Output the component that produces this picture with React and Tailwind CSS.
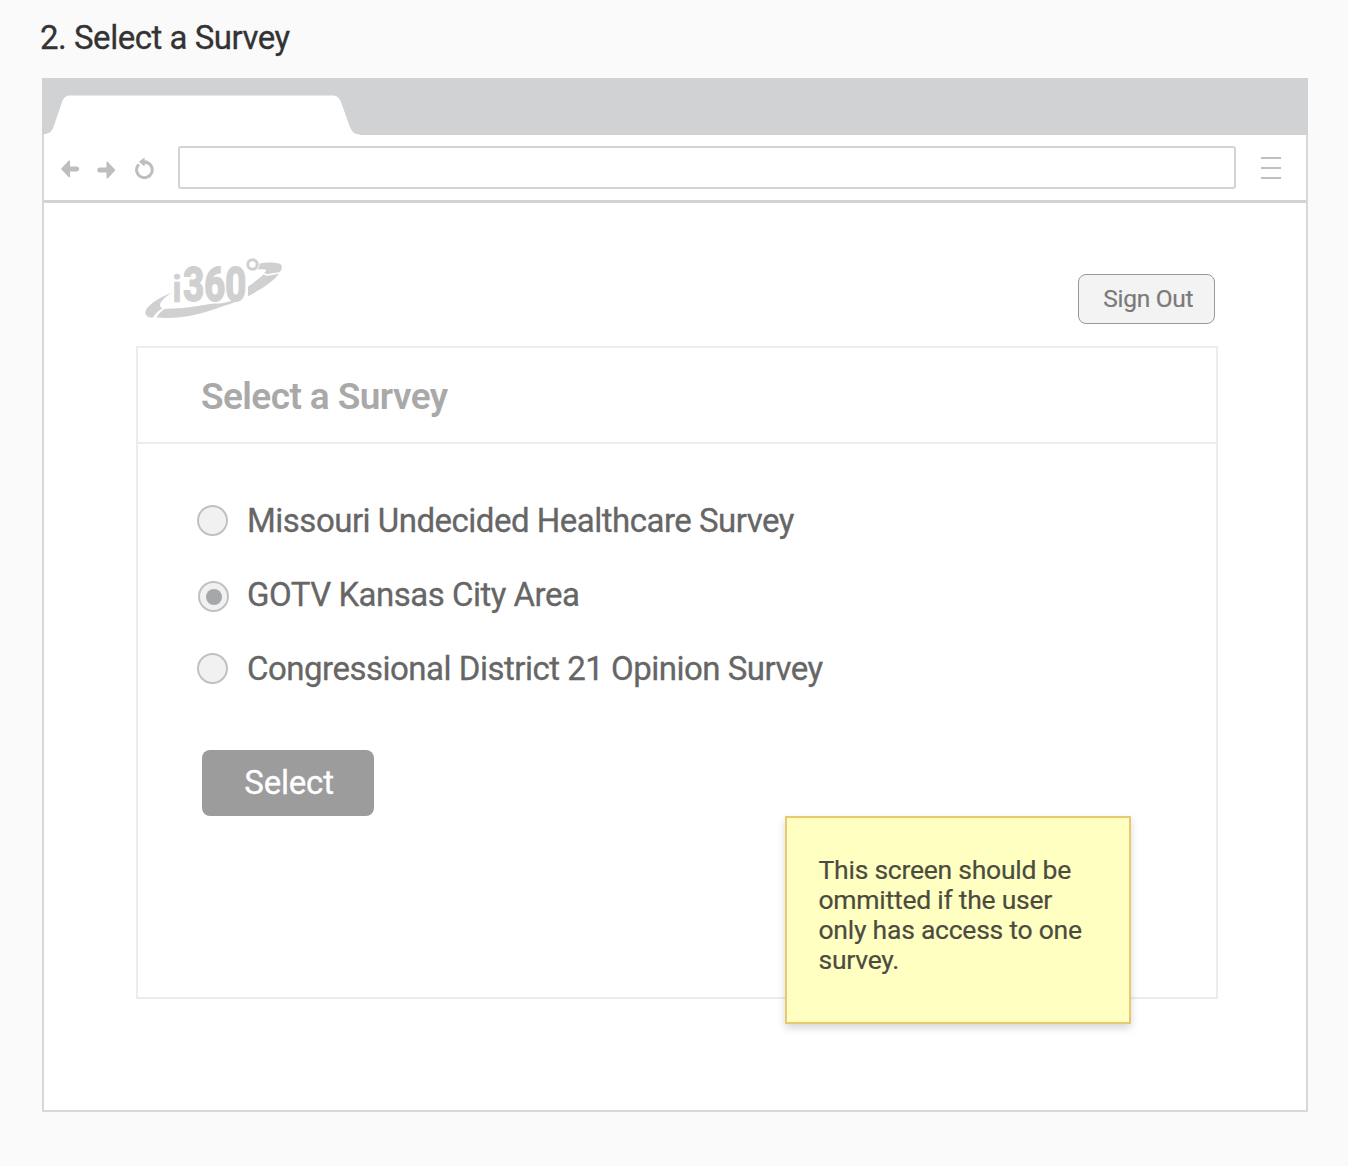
const surveys = [
  { name: 'Missouri Undecided Healthcare Survey', checked: false },
  { name: 'GOTV Kansas City Area', checked: true },
  { name: 'Congressional District 21 Opinion Survey', checked: false },
];

function Logo() {
  return (
    <svg className="block h-[66px] w-[144px]" viewBox="141 255 144 66" fill="#d0d0d0" role="img" aria-label="i360">
      {/* orbit: left tail, lower sweep, right sweep, upper cap */}
      <path d="M172 292.500 C158 298 146 306 145.300 312 C145 316 149 318 153 317.500 C155 314 158 311 162.500 308.300 C158 306 159 301 172 292.500 Z" />
      <path d="M156.500 317.500 C158.500 314 161 311 165 308.700 C180 309 200 306 216 303 L240 298.500 C236 301 228 304 222 306.500 C200 315 178 319.500 156.500 317.500 Z" />
      <path d="M248 286.500 C254 282.500 259 278.500 263.500 274.500 C266 276 268.500 276 271 275.300 L279 273.800 C274 281 262 289 248 296.300 Z" />
      <path d="M257 269.500 C258.500 267.500 259 265.500 258.500 263.700 C268 262 280 262 281.500 265.500 C282.500 268.500 281.500 271 279 272.300 C275 272.800 271 273.300 268 274.300 C266 274 264.800 273.300 264 272.800 C269 269.800 265 268.700 257 269.500 Z" />
      <rect x="182" y="264" width="65" height="39.500" rx="5" fill="#fff" />
      <path d="M221 303.500 L240 299 L236 301.700 C231 303.700 226 305.200 221 306.500 Z" />
      <g fontFamily="Roboto, sans-serif" fontWeight="700" stroke="#d0d0d0">
        <text transform="translate(172.200 302)" fontSize="36" strokeWidth="0.5">i</text>
        <text transform="translate(183.300 301) scale(0.745 1)" fontSize="49" strokeWidth="2">360</text>
      </g>
      <circle cx="252.500" cy="264.500" r="7" fill="#fff" />
      <circle cx="252.500" cy="264.500" r="4.700" fill="#fff" stroke="#d0d0d0" strokeWidth="3" />
    </svg>
  );
}

function BackArrow({ className }) {
  return (
    <svg className={className} viewBox="0 0 18 18" fill="#bebebe">
      <path d="M0.300 8.200 L7.300 0.700 Q8.800 -0.200 8.800 1.500 V6.400 H15.800 Q18 6.600 18 8.800 Q18 11.200 15.800 11.400 H8.800 V16.300 Q8.800 18 7.300 17.100 L0.300 9.600 Q-0.300 8.900 0.300 8.200 Z" />
    </svg>
  );
}

function BrowserBar() {
  return (
    <>
      <div className="-mx-0.5 -mt-0.5 h-[57px] shrink-0 bg-[#d1d2d4]">
        <svg className="block h-[57px] w-[330px]" viewBox="42 78 330 57" fill="#fff">
          <path d="M44 135 V134 C49 134 51.500 132 53.500 127 L62 102 C64 97 66 95.500 71 95.500 H332 C337 95.500 339 97.500 341 102 L349.500 126 C352 132 354 134.300 360 134.500 V135 Z" />
        </svg>
      </div>
      <div className="flex h-[68px] shrink-0 items-center border-b-[3px] border-[#d3d3d4] pl-[17px] pr-6">
        <BackArrow className="mt-[3.500px] h-[18px] w-[18.500px]" />
        <BackArrow className="ml-[17.500px] mt-1 h-[18px] w-[18.500px] rotate-180" />
        <svg className="ml-[18.500px] mt-[2px] h-[23px] w-[20px]" viewBox="134 156.500 20 23">
          <path d="M138 164.900 A7.800 7.800 0 1 0 146.300 161.800" fill="none" stroke="#bebebe" strokeWidth="3" strokeLinecap="round" />
          <path d="M139.300 161.300 L144.300 157.600 V160.300 H146.500 V163.300 H144.300 V165.400 Z" fill="#bebebe" stroke="#bebebe" strokeWidth="0.700" strokeLinejoin="round" />
        </svg>
        <div className="ml-[24px] h-[43px] w-[1058px] rounded-[3px] border-2 border-[#d3d3d4]" />
        <div className="ml-[25px] flex w-5 flex-col gap-2">
          <div className="h-0.5 bg-[#bfbfc0]" />
          <div className="h-0.5 bg-[#bfbfc0]" />
          <div className="h-0.5 bg-[#bfbfc0]" />
        </div>
      </div>
    </>
  );
}

function Radio({ checked }) {
  return (
    <span
      className={
        checked
          ? 'ml-px mt-[3px] flex size-[31px] items-center justify-center rounded-full border-2 border-[#c1c1c1] bg-[#f1f1f1]'
          : '-mt-px mr-px flex size-[31px] items-center justify-center rounded-full border-2 border-[#c1c1c1] bg-[#f1f1f1]'
      }
    >
      {checked && <span className="size-4 rounded-full bg-[#a6a7aa]" />}
    </span>
  );
}

export default function App() {
  return (
    <div className="flex h-[1166px] w-[1348px] flex-col bg-[#fafafa] pl-[42px] pt-[18px] font-['Roboto',sans-serif]">
      <h1 className="-ml-[2px] h-[60px] whitespace-nowrap text-[33px] leading-10 tracking-[-0.48px] text-[#333] [-webkit-text-stroke:0.3px]">2. Select a Survey</h1>
      <div className="flex h-[1034px] w-[1266px] flex-col border-2 border-[#d8d8d9] bg-white">
        <BrowserBar />
        <header className="ml-[97px] mr-[91px] mt-[52px] flex h-[91px] shrink-0 justify-between">
          <Logo />
          <button className="mt-[19px] h-[50px] w-[137.500px] rounded-[8px] border border-[#999] bg-[#f3f3f3] pl-1 text-[24.500px] tracking-[-0.25px] text-[#7a7a7a] [-webkit-text-stroke:0.2px]">
            Sign Out
          </button>
        </header>
        <main className="relative ml-[92px] h-[653px] w-[1082px] shrink-0 border-2 border-[#ececec]">
          <div className="h-[96px] border-b-2 border-[#ececec] pl-[63px] pt-[25px]">
            <h2 className="whitespace-nowrap text-[37px] font-semibold leading-[48px] tracking-[-0.58px] text-[#a9a9a9]">Select a Survey</h2>
          </div>
          <div className="flex flex-col pl-[59px] pt-10">
            {surveys.map((s) => (
              <label key={s.name} className="flex h-[74px] items-center">
                <Radio checked={s.checked} />
                <span className="ml-[18px] whitespace-nowrap text-[33px] leading-10 tracking-[-0.5px] text-[#666] [-webkit-text-stroke:0.3px]">{s.name}</span>
              </label>
            ))}
          </div>
          <button className="ml-[64px] mt-[44px] h-[66px] w-[172px] rounded-[8px] bg-[#9c9c9c] pb-px pl-0.5 text-[33px] tracking-[-0.2px] text-white [-webkit-text-stroke:0.3px]">
            Select
          </button>
          <aside className="absolute left-[647px] top-[468px] h-[208px] w-[346px] border-2 border-[#e7ca70] bg-[#ffffc2] pl-[31.500px] pt-[37px] text-[26.500px] leading-[30px] tracking-[-0.24px] text-[#4b4b3f] shadow-[0_4px_8px_rgba(0,0,0,0.16)] [-webkit-text-stroke:0.2px]">
            This screen should be
            <br />
            ommitted if the user
            <br />
            only has access to one
            <br />
            survey.
          </aside>
        </main>
      </div>
    </div>
  );
}
